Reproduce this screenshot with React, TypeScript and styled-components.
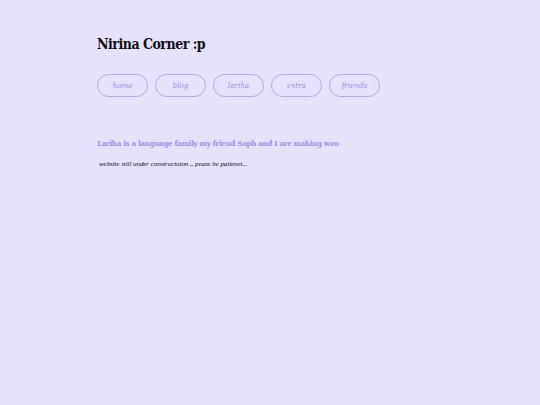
import React from "react";
import styled, { createGlobalStyle } from "styled-components";

const Global = createGlobalStyle`
  html, body { margin: 0; padding: 0; background: #e6e2fe; }
  body { font-family: "DejaVu Serif", serif; }
`;

const Page = styled.div`
  min-height: 405px;
  background: #e6e2fe;
  padding: 34px 0 0 97px;
  box-sizing: border-box;
`;

const Title = styled.h1`
  margin: 0;
  font-family: "DejaVu Serif", serif;
  font-stretch: condensed;
  font-size: 14px;
  letter-spacing: -0.5px;
  font-weight: bold;
  color: #111;
  line-height: 20px;
`;

const Nav = styled.nav`
  display: flex;
  gap: 7px;
  margin-top: 20px;
`;

const NavButton = styled.a`
  display: flex;
  align-items: center;
  justify-content: center;
  width: 51px;
  height: 23px;
  box-sizing: border-box;
  border: 1px solid #b3a8f5;
  border-radius: 12px;
  color: #9d90ee;
  font-family: "DejaVu Serif", serif;
  font-stretch: condensed;
  font-style: italic;
  font-size: 8px;
  text-decoration: none;
`;

const Heading = styled.h2`
  margin: 40px 0 0 0;
  font-family: "DejaVu Serif", serif;
  font-stretch: condensed;
  font-size: 8px;
  letter-spacing: -0.35px;
  font-weight: bold;
  color: #9d90ee;
  line-height: 12px;
`;

const Note = styled.p`
  margin: 11px 0 0 2px;
  font-family: "Liberation Serif", serif;
  font-style: italic;
  font-size: 7px;
  letter-spacing: -0.07px;
  color: #111;
`;

export default function App() {
  const links = ["home", "blog", "lariha", "extra", "friends"];
  return (
    <>
      <Global />
      <Page>
        <Title>Nirina Corner :p</Title>
        <Nav>
          {links.map((l) => (
            <NavButton key={l} href="#">{l}</NavButton>
          ))}
        </Nav>
        <Heading>Lariha is a language family my friend Saph and I are making woo</Heading>
        <Note>website still under constructuion ,, pease be patienet...</Note>
      </Page>
    </>
  );
}
